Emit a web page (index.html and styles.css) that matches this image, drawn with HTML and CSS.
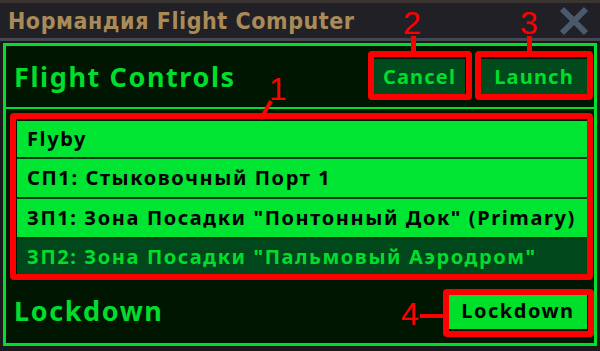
FILE: index.html
```html
<!DOCTYPE html>
<html>
<head>
<meta charset="utf-8">
<link rel="stylesheet" href="styles.css">
</head>
<body>
<div class="backdrop"></div>
<div class="window">
  <div class="titlebar">
    <span class="title">Нормандия Flight Computer</span>
    <svg class="close" width="32" height="32" viewBox="0 0 32 32"><path d="M4 4 L28 28 M28 4 L4 28" stroke="#4b5a6a" stroke-width="6" stroke-linecap="butt"/></svg>
  </div>
  <div class="title-sep"></div>
  <div class="content">
    <div class="panel">
      <div class="header">
        <span class="heading">Flight Controls</span>
        <div class="actions">
          <button class="btn dark">Cancel</button>
          <button class="btn dark launch">Launch</button>
        </div>
      </div>
      <div class="list">
        <div class="row">Flyby</div>
        <div class="row">СП1: Стыковочный Порт 1</div>
        <div class="row">ЗП1: Зона Посадки "Понтонный Док" (Primary)</div>
        <div class="row selected">ЗП2: Зона Посадки "Пальмовый Аэродром"</div>
      </div>
      <div class="footer">
        <span class="heading">Lockdown</span>
        <button class="btn light">Lockdown</button>
      </div>
    </div>
  </div>
</div>

<div class="anno box1"></div>
<div class="anno box2"></div>
<div class="anno box3"></div>
<div class="anno box4"></div>
<div class="num n1">1</div>
<div class="num n2">2</div>
<div class="num n3">3</div>
<div class="num n4">4</div>
<div class="line l2"></div>
<div class="line l3"></div>
<div class="line l4"></div>
<svg class="l1" width="20" height="20" viewBox="0 0 20 20"><path d="M15 1 L5 19" stroke="#ff0000" stroke-width="4"/></svg>
</body>
</html>
```
FILE: styles.css
```css
html, body {
  margin: 0;
  padding: 0;
}
body {
  width: 600px;
  height: 351px;
  background: #1c1c20;
  position: relative;
  overflow: hidden;
  font-family: "Noto Sans", "Open Sans", sans-serif;
}
.backdrop {
  height: 3px;
  background: #3a3530;
}
.window {
  height: 348px;
  display: flex;
  flex-direction: column;
}
.titlebar {
  height: 35px;
  background: #202026;
  display: flex;
  align-items: center;
  justify-content: space-between;
  padding: 0 10px 0 8px;
}
.title {
  font-family: "DejaVu Sans Condensed", "DejaVu Sans", sans-serif;
  font-weight: bold;
  font-size: 23px;
  color: #a98b57;
  letter-spacing: 0.55px;
}
.close {
  display: block;
}
.title-sep {
  height: 3px;
  background: #46464e;
}
.content {
  flex: 1;
  padding: 2px 3px 5px 3px;
  background: #1a1a1d;
  display: flex;
}
.panel {
  flex: 1;
  border: 3px solid #00e02a;
  background: #001600;
  display: flex;
  flex-direction: column;
}
.header {
  height: 61px;
  border-bottom: 2px solid #00e02a;
  display: flex;
  align-items: center;
  justify-content: space-between;
  padding: 0 7px 0 8px;
}
.heading {
  font-size: 27px;
  font-weight: bold;
  color: #00de2c;
  letter-spacing: 1.6px;
}
.actions {
  display: flex;
  gap: 16px;
}
.btn {
  font-family: "Noto Sans", sans-serif;
  font-weight: bold;
  font-size: 20px;
  letter-spacing: 1.2px;
  border: none;
  height: 36px;
  padding: 0;
  margin: 0;
  text-align: center;
}
.btn.dark {
  background: #004a1c;
  color: #00de2c;
  width: 91px;
}
.btn.dark.launch {
  width: 106px;
}
.btn.light {
  background: #00e02a;
  color: #000;
  width: 138px;
  letter-spacing: 1.5px;
}
.list {
  margin: 12px 7px 0 11px;
  display: flex;
  flex-direction: column;
}
.row {
  background: #00e432;
  color: #000;
  font-weight: bold;
  font-size: 20px;
  letter-spacing: 1.6px;
  height: 38px;
  line-height: 38px;
  padding-left: 10px;
  border-bottom: 2px solid #003a0e;
  white-space: nowrap;
}
.row:first-child {
  height: 36px;
  line-height: 36px;
}
.row.selected {
  background: #00471c;
  color: #00de2c;
  border-bottom: none;
  height: 36px;
  line-height: 36px;
}
.footer {
  flex: 1;
  display: flex;
  align-items: center;
  justify-content: space-between;
  padding: 3px 7px 0 8px;
}
.anno {
  position: absolute;
  border: 6px solid #ff0000;
  border-radius: 4px;
}
.box1 { left: 10px; top: 113px; width: 571px; height: 155px; }
.box2 { left: 368px; top: 51px; width: 92px; height: 37px; }
.box3 { left: 475px; top: 51px; width: 106px; height: 37px; }
.box4 { left: 443px; top: 289px; width: 139px; height: 36px; }
.num {
  position: absolute;
  font-family: "Liberation Sans", sans-serif;
  font-size: 32px;
  line-height: 32px;
  color: #ff0000;
}
.n1 { left: 269px; top: 73px; }
.n2 { left: 403px; top: 7px; }
.n3 { left: 520px; top: 7px; }
.n4 { left: 401px; top: 298px; }
.line {
  position: absolute;
  background: #ff0000;
}
.l2 { left: 411px; top: 36px; width: 5px; height: 16px; }
.l3 { left: 527px; top: 36px; width: 5px; height: 16px; }
.l4 { left: 420px; top: 314px; width: 25px; height: 4px; }
.l1 { position: absolute; left: 256px; top: 100px; }
```
